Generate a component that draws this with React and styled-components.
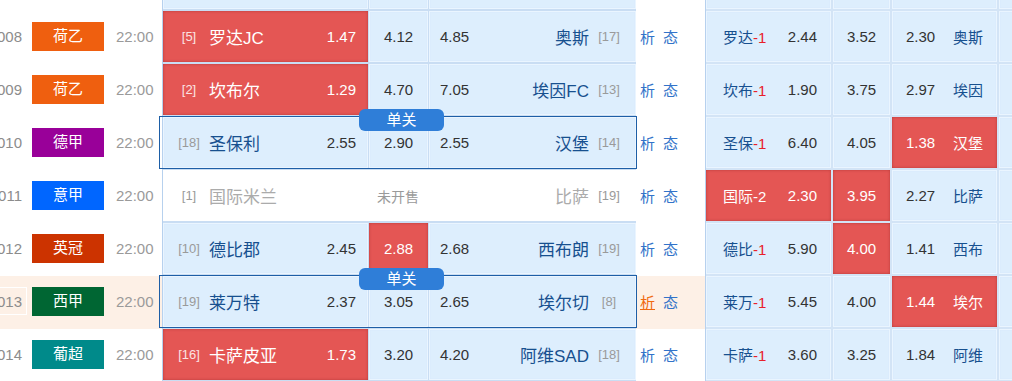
import React from 'react';
import styled, { createGlobalStyle } from 'styled-components';

const GlobalStyle = createGlobalStyle`
  html, body {
    margin: 0;
    padding: 0;
    width: 1012px;
    height: 381px;
    overflow: hidden;
    background: #fff;
  }
  body {
    font-family: "Liberation Sans", "Noto Sans CJK SC", sans-serif;
  }
`;

const Table = styled.div`
  margin-top: -42px;
  margin-left: -10px;
`;

const Row = styled.div`
  display: grid;
  grid-template-columns: 37px 83px 52px 474px 69px 1fr;
  height: 53px;
  background: ${(p) => (p.$hl ? '#fdf0e6' : '#fff')};
`;

const NumCell = styled.div`
  display: flex;
  align-items: flex-start;
  padding-top: 11px;
`;

const NumBox = styled.div`
  width: 100%;
  height: 28px;
  box-sizing: border-box;
  border: 1px solid ${(p) => (p.$hl ? '#fff' : 'transparent')};
  border-left: none;
  padding-right: 4px;
  text-align: right;
  font-size: 15px;
  line-height: 27px;
  color: #8c8c8c;
`;

const LeagueCell = styled.div`
  padding: 11px 0 0 5px;
`;

const League = styled.div`
  width: 72px;
  height: 29px;
  background: ${(p) => p.$color};
  color: #fff;
  font-size: 15px;
  line-height: 28px;
  text-align: center;
`;

const TimeCell = styled.div`
  padding-left: 6px;
  height: 51px;
  display: flex;
  align-items: center;
  font-size: 15px;
  color: #9a9a9a;
`;

const MatchCol = styled.div`
  border-left: 1px solid #b7d1ee;
  background: #c9ddf3;
  padding-bottom: 2px;
`;

const MatchBlock = styled.div`
  position: relative;
  display: grid;
  grid-template-columns: ${(p) => (p.$closed ? '205px 60px 208px' : '205px 59px 207px')};
  gap: ${(p) => (p.$closed ? '0' : '1px')};
  height: 51px;
  ${(p) =>
    p.$hl &&
    `
    &::after {
      content: '';
      position: absolute;
      top: -1px;
      bottom: -1px;
      left: -4px;
      right: -1px;
      border: 1px solid #1d5ea6;
      pointer-events: none;
    }
  `}
`;

const tones = {
  blue: { bg: '#ddeefd', shadow: 'inset 0 0 0 1px #eaf5ff, inset 0 0 2px #c2d8f0', color: '#333' },
  red: { bg: '#e45654', shadow: 'inset 0 0 3px #b7393a', color: '#fff' },
  white: { bg: '#fff', shadow: 'none', color: '#999' },
};

const Cell = styled.div`
  display: flex;
  align-items: center;
  justify-content: ${(p) => p.$justify || 'flex-start'};
  height: 51px;
  box-sizing: border-box;
  padding: ${(p) => p.$pad || '0'};
  background: ${(p) => tones[p.$tone].bg};
  box-shadow: ${(p) => tones[p.$tone].shadow};
  color: ${(p) => tones[p.$tone].color};
  font-size: 15px;
`;

const Rank = styled.span`
  width: 36px;
  flex: none;
  text-align: center;
  font-size: 13px;
  color: ${(p) => (p.$tone === 'red' ? '#fbe3e3' : '#9a9a9a')};
`;

const Team = styled.span`
  font-size: 17px;
  color: ${(p) => (p.$tone === 'red' ? '#fff' : p.$tone === 'white' ? '#ababab' : '#17508f')};
  margin: 0 2px;
`;

const Spacer = styled.span`
  flex: 1;
`;

const Closed = styled.span`
  font-size: 14px;
  color: #9a9a9a;
`;

const Badge = styled.div`
  position: absolute;
  top: -8px;
  left: 196px;
  width: 85px;
  height: 22px;
  border-radius: 6px;
  background: #2f7ed8;
  color: #fff;
  font-size: 15px;
  line-height: 21px;
  text-align: center;
  z-index: 2;
`;

const Actions = styled.div`
  display: flex;
  align-items: center;
  gap: 8px;
  height: 51px;
  padding-left: 4px;
  font-size: 15px;
`;

const Act = styled.span`
  color: ${(p) => (p.$active ? '#f06a10' : '#3273c9')};
  text-decoration: ${(p) => (p.$active ? 'underline' : 'none')};
`;

const RightCol = styled.div`
  border-left: 1px solid #b7d1ee;
  background: #d3e4f6;
  padding-bottom: 2px;
  overflow: hidden;
`;

const RightBlock = styled.div`
  display: grid;
  grid-template-columns: 125px 57px 105px 105px;
  gap: 2px;
  height: 51px;
`;

const Hcp = styled.span`
  color: ${(p) => (p.$tone === 'red' ? '#fff' : '#17508f')};
  b {
    font-weight: normal;
    color: ${(p) => (p.$tone === 'red' ? '#fff' : '#e8202a')};
  }
`;

const Short = styled.span`
  color: ${(p) => (p.$tone === 'red' ? '#fff' : '#17508f')};
`;

const rows = [
  {
    no: '008', league: '荷乙', color: '#ef5f0f',
    home: { rank: '[5]', name: '罗达JC', odds: '1.47' }, draw: '4.12', away: { rank: '[17]', name: '奥斯', odds: '4.85' },
    red: ['home'],
    r: { short: '罗达', hcp: '-1', w: '2.44', d: '3.52', l: '2.30', away: '奥斯' }, rred: [],
  },
  {
    no: '009', league: '荷乙', color: '#ef5f0f',
    home: { rank: '[2]', name: '坎布尔', odds: '1.29' }, draw: '4.70', away: { rank: '[13]', name: '埃因FC', odds: '7.05' },
    red: ['home'],
    r: { short: '坎布', hcp: '-1', w: '1.90', d: '3.75', l: '2.97', away: '埃因' }, rred: [],
  },
  {
    no: '010', league: '德甲', color: '#990099', single: true,
    home: { rank: '[18]', name: '圣保利', odds: '2.55' }, draw: '2.90', away: { rank: '[14]', name: '汉堡', odds: '2.55' },
    red: [],
    r: { short: '圣保', hcp: '-1', w: '6.40', d: '4.05', l: '1.38', away: '汉堡' }, rred: ['l'],
  },
  {
    no: '011', league: '意甲', color: '#0066ff', closed: true,
    home: { rank: '[1]', name: '国际米兰' }, away: { rank: '[19]', name: '比萨' },
    red: [],
    r: { short: '国际', hcp: '-2', w: '2.30', d: '3.95', l: '2.27', away: '比萨' }, rred: ['w', 'd'],
  },
  {
    no: '012', league: '英冠', color: '#cc3300',
    home: { rank: '[10]', name: '德比郡', odds: '2.45' }, draw: '2.88', away: { rank: '[19]', name: '西布朗', odds: '2.68' },
    red: ['draw'],
    r: { short: '德比', hcp: '-1', w: '5.90', d: '4.00', l: '1.41', away: '西布' }, rred: ['d'],
  },
  {
    no: '013', league: '西甲', color: '#006633', single: true, hl: true,
    home: { rank: '[19]', name: '莱万特', odds: '2.37' }, draw: '3.05', away: { rank: '[8]', name: '埃尔切', odds: '2.65' },
    red: [],
    r: { short: '莱万', hcp: '-1', w: '5.45', d: '4.00', l: '1.44', away: '埃尔' }, rred: ['l'],
  },
  {
    no: '014', league: '葡超', color: '#008a8a',
    home: { rank: '[16]', name: '卡萨皮亚', odds: '1.73' }, draw: '3.20', away: { rank: '[18]', name: '阿维SAD', odds: '4.20' },
    red: ['home'],
    r: { short: '卡萨', hcp: '-1', w: '3.60', d: '3.25', l: '1.84', away: '阿维' }, rred: [],
  },
];

const EmptyRow = () => (
  <Row>
    <div />
    <div />
    <div />
    <MatchCol>
      <MatchBlock>
        <Cell $tone="blue" />
        <Cell $tone="blue" />
        <Cell $tone="blue" />
      </MatchBlock>
    </MatchCol>
    <div />
    <RightCol>
      <RightBlock>
        <Cell $tone="blue" />
        <Cell $tone="blue" />
        <Cell $tone="blue" />
        <Cell $tone="blue" />
      </RightBlock>
    </RightCol>
  </Row>
);

const MatchRow = ({ m }) => {
  const tone = (k) => (m.closed ? 'white' : m.red.includes(k) ? 'red' : 'blue');
  const rtone = (k) => (m.rred.includes(k) ? 'red' : 'blue');
  return (
    <Row $hl={m.hl}>
      <NumCell>
        <NumBox $hl={m.hl}>{m.no}</NumBox>
      </NumCell>
      <LeagueCell>
        <League $color={m.color}>{m.league}</League>
      </LeagueCell>
      <TimeCell>22:00</TimeCell>
      <MatchCol>
        <MatchBlock $hl={m.single} $closed={m.closed}>
          {m.single && <Badge>单关</Badge>}
          <Cell $tone={tone('home')} $pad="0 12px 0 8px">
            <Rank $tone={tone('home')}>{m.home.rank}</Rank>
            <Team $tone={tone('home')}>{m.home.name}</Team>
            <Spacer />
            {m.home.odds}
          </Cell>
          <Cell $tone={tone('draw')} $justify="center">
            {m.closed ? <Closed>未开售</Closed> : m.draw}
          </Cell>
          <Cell $tone={tone('away')} $pad="0 9px 0 11px">
            {m.away.odds}
            <Spacer />
            <Team $tone={tone('away')}>{m.away.name}</Team>
            <Rank $tone={tone('away')}>{m.away.rank}</Rank>
          </Cell>
        </MatchBlock>
      </MatchCol>
      <Actions>
        <Act $active={m.hl}>析</Act>
        <Act>态</Act>
      </Actions>
      <RightCol>
        <RightBlock>
          <Cell $tone={rtone('w')} $justify="space-between" $pad="0 14px 0 17px">
            <Hcp $tone={rtone('w')}>
              {m.r.short}
              <b>{m.r.hcp}</b>
            </Hcp>
            {m.r.w}
          </Cell>
          <Cell $tone={rtone('d')} $justify="center">
            {m.r.d}
          </Cell>
          <Cell $tone={rtone('l')} $justify="space-between" $pad="0 14px">
            {m.r.l}
            <Short $tone={rtone('l')}>{m.r.away}</Short>
          </Cell>
          <Cell $tone="blue" />
        </RightBlock>
      </RightCol>
    </Row>
  );
};

export default function App() {
  return (
    <>
      <GlobalStyle />
      <Table>
        <EmptyRow />
        {rows.map((m) => (
          <MatchRow key={m.no} m={m} />
        ))}
        <EmptyRow />
      </Table>
    </>
  );
}
